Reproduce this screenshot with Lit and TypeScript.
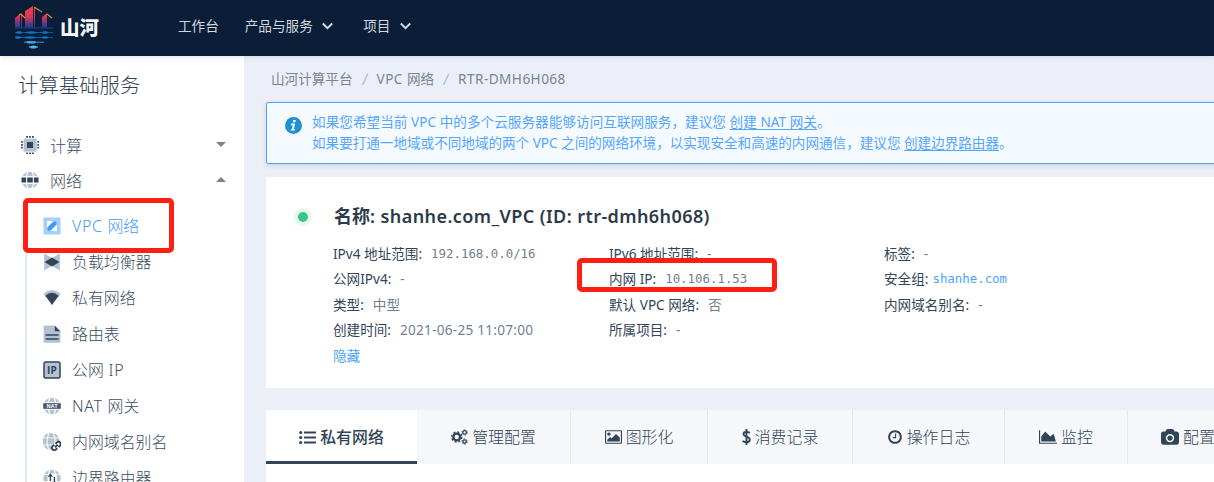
import { LitElement, html, svg, css } from "lit";
import { customElement } from "lit/decorators.js";

const globe = (color = "#b3c1d1") => svg`
  <circle cx="9" cy="9" r="8.6" fill="${color}"/>
  <ellipse cx="9" cy="9" rx="4" ry="9.2" fill="none" stroke="#fff" stroke-width="1.1"/>
  <path d="M0 5.400h18M0 12.600h18" stroke="#fff" stroke-width=".9"/>`;

const ICONS: Record<string, unknown> = {
  cpu: svg`<rect x="2.600" y="2.600" width="13" height="13" fill="#b3c1d1"/><rect x="6" y="6" width="6" height="6" fill="#324558"/>
    <path d="M5.200 .8h8M5.200 17.400h8" stroke="#324558" stroke-width="1.700" stroke-dasharray="1.800 1.100"/>
    <path d="M.9 5v8M17.300 5v8" stroke="#324558" stroke-width="1.700" stroke-dasharray="1.800 1.100"/>`,
  net: svg`${globe()}<path d="M0 6h18v6H0z" fill="#fff"/><path d="M.5 6.500h4.600v5H.5zM6.200 6.500h5.600v5H6.200zM12.900 6.500h4.600v5h-4.600z" fill="#324558"/>`,
  vpc: svg`<rect x=".5" y=".5" width="17" height="17" rx="1" fill="#a3cffd"/><rect x="4" y="4" width="10" height="10" fill="#fff"/>
    <path d="M4.300 13.700v-3.200l6.200-6.200h3.200v3.200l-6.200 6.200z" fill="#3f9bfa"/>`,
  lb: svg`<path d="M1.200 .5L9 5l7.800-4.500v17L9 13l-7.800 4.500z" fill="#b3c1d1"/><path d="M1.500 9L9 4.600 16.500 9 9 13.400z" fill="#324558"/>`,
  wifi: svg`<path d="M.4 4.800Q9-2.600 17.600 4.800L15.600 8Q9 2 2.400 8z" fill="#b3c1d1"/><path d="M2.300 6.700Q9 .8 15.700 6.700L9 16z" fill="#324558"/>`,
  doc: svg`<path d="M.6 .6h11.200l5.600 5.600v11.600H.6z" fill="#b3c1d1"/><path d="M11.800 .8v5.500h5.500z" fill="#324558"/>
    <path d="M2.600 10h13M2.600 14h13" stroke="#324558" stroke-width="1.500"/>`,
  ip: svg`<rect x="1" y="1" width="16" height="16" rx="1.500" fill="#b3c1d1" stroke="#324558" stroke-width="1.500"/>
    <text x="8.900" y="12.600" text-anchor="middle" font-family="Open Sans" font-weight="700" font-size="10" fill="#324558">IP</text>`,
  nat: svg`${globe()}<rect x=".2" y="6.200" width="17.600" height="5.600" fill="#4a5c70"/>
    <text x="9" y="10.900" text-anchor="middle" font-family="Open Sans" font-weight="700" font-size="5.200" fill="#fff">NAT</text>`,
  link: svg`<g transform="translate(-.9 -.6)">${globe()}</g><path d="M8.500 13l5-5.500H19V19H8.500z" fill="#fff"/>
    <g transform="rotate(-42 13.300 13)" fill="none" stroke="#324558" stroke-width="1.900"><path d="M12.600 10.700H10.500a2.300 2.300 0 0 0 0 4.600h2.100M14.200 10.700h2a2.300 2.300 0 0 1 0 4.600h-2M11.500 13h3.700"/></g>`,
  edge: svg`${globe()}<rect x="5" y="4.500" width="8.600" height="12" fill="#fff"/>
    <path d="M7.400 12V5.500M5.500 7.600l1.900-2.200 1.900 2.200M11.400 8v7M9.500 13l1.900 2.200 1.900-2.200" fill="none" stroke="#324558" stroke-width="1.400"/>`,
};

const FA: Record<string, unknown> = {
  list: svg`<svg width="17" height="15" viewBox="0 0 17 15"><path d="M5 2.500h12M5 7.500h12M5 12.500h12" stroke="currentColor" stroke-width="2"/><g fill="currentColor"><circle cx="1.700" cy="2.500" r="1.600"/><circle cx="1.700" cy="7.500" r="1.600"/><circle cx="1.700" cy="12.500" r="1.600"/></g></svg>`,
  cogs: svg`<svg width="17" height="16" viewBox="0 0 17.500 16" fill="none" stroke="currentColor"><circle cx="5.900" cy="8" r="3.500" stroke-width="2.500"/><circle cx="5.900" cy="8" r="5.200" stroke-width="1.400" stroke-dasharray="2.040 2.040"/>
    <circle cx="14" cy="3.300" r="1.800" stroke-width="1.400"/><circle cx="14" cy="3.300" r="2.800" stroke-width=".9" stroke-dasharray="1.470 1.470"/>
    <circle cx="14" cy="12.700" r="1.800" stroke-width="1.400"/><circle cx="14" cy="12.700" r="2.800" stroke-width=".9" stroke-dasharray="1.470 1.470"/></svg>`,
  image: svg`<svg width="17" height="16" viewBox="0 0 1920 1792" fill="currentColor"><path d="M640 576q0 80-56 136t-136 56-136-56-56-136 56-136 136-56 136 56 56 136zm1024 384v448h-1408v-192l320-320 160 160 512-512zm96-704h-1600q-13 0-22.500 9.500t-9.500 22.500v1216q0 13 9.500 22.500t22.500 9.500h1600q13 0 22.500-9.500t9.500-22.500v-1216q0-13-9.500-22.500t-22.500-9.500zm160 32v1216q0 66-47 113t-113 47h-1600q-66 0-113-47t-47-113v-1216q0-66 47-113t113-47h1600q66 0 113 47t47 113z"/></svg>`,
  dollar: svg`<svg width="9" height="16" viewBox="0 0 9 16" fill="none" stroke="currentColor" stroke-width="1.900"><path d="M4.500 0v16M7.800 3.900C5.500 2.500 1.500 2.400 1.500 5c0 3.200 6.300 2.200 6.300 5.600 0 3.200-4.600 3.300-7.200 1.400"/></svg>`,
  clock: svg`<svg width="16" height="16" viewBox="64 0 1664 1792" fill="currentColor"><path d="M1024 544v448q0 14-9 23t-23 9h-320q-14 0-23-9t-9-23v-64q0-14 9-23t23-9h224v-352q0-14 9-23t23-9h64q14 0 23 9t9 23zm416 352q0-148-73-273t-198-198-273-73-273 73-198 198-73 273 73 273 198 198 273 73 273-73 198-198 73-273zm224 0q0 209-103 385.500t-279.500 279.500-385.500 103-385.500-103-279.500-279.500-103-385.500 103-385.500 279.500-279.500 385.500-103 385.500 103 279.500 279.500 103 385.500z"/></svg>`,
  area: svg`<svg width="18" height="16" viewBox="0 0 2048 1792" fill="currentColor"><path d="M2048 1536v128h-2048v-1536h128v1408h1920zm-384-1024l256 896h-1664v-576l448-576 576 576z"/></svg>`,
  camera: svg`<svg width="18" height="17" viewBox="0 0 1920 1792" fill="currentColor"><path d="M960 672q119 0 203.500 84.500t84.500 203.500-84.500 203.500-203.500 84.500-203.500-84.500-84.500-203.500 84.500-203.500 203.500-84.500zm704-416q106 0 181 75t75 181v896q0 106-75 181t-181 75h-1408q-106 0-181-75t-75-181v-896q0-106 75-181t181-75h224l51-136q19-49 69.500-84.500t103.500-35.500h512q53 0 103.500 35.500t69.500 84.500l51 136h224zm-704 1152q185 0 316.500-131.500t131.500-316.500-131.500-316.500-316.500-131.500-316.500 131.500-131.500 316.500 131.500 316.500 316.500 131.500z"/></svg>`,
};

const MENU = [
  ["vpc", "VPC 网络"], ["lb", "负载均衡器"], ["wifi", "私有网络"], ["doc", "路由表"],
  ["ip", "公网 IP"], ["nat", "NAT 网关"], ["link", "内网域名别名"], ["edge", "边界路由器"],
];
const TABS = [
  ["list", "私有网络", 151], ["cogs", "管理配置", 154], ["image", "图形化", 137], ["dollar", "消费记录", 145],
  ["clock", "操作日志", 152], ["area", "监控", 123], ["camera", "配置", 120],
] as const;
const INFO: string[][][] = [
  [["IPv4 地址范围:", "192.168.0.0/16", "mono"], ["公网IPv4:", "-"], ["类型:", "中型"], ["创建时间:", "2021-06-25 11:07:00", "date"]],
  [["IPv6 地址范围:", "-"], ["内网 IP:", "10.106.1.53", "mono"], ["默认 VPC 网络:", "否"], ["所属项目:", "-"]],
  [["标签:", "-"], ["安全组:", "shanhe.com", "mono link"], ["内网域名别名:", "-"]],
];

/* Latin runs get slightly wider tracking than the Chinese text around them. */
const mixed = (text: string) =>
  text.split(/([\x20-\x7e]+)/).filter(Boolean).map((s) => (/^[\x20-\x7e]/.test(s) ? html`<span class="lat">${s}</span>` : s));

@customElement("app-root")
export class AppRoot extends LitElement {
  static styles = css`
    :host { display: block; position: relative; width: 1214px; height: 482px; overflow: hidden; background: #eceff8;
      font-family: "Noto Sans", "Noto Sans CJK SC", sans-serif; font-size: 13.600px; color: #324558; white-space: nowrap; }
    * { box-sizing: border-box; }
    svg { display: block; flex: none; }
    .lat { white-space: pre; }
    header { height: 56px; background: #0a1e38; display: flex; align-items: center; color: #d3d8df; padding-left: 15px; position: relative; box-shadow: 0 1px 5px rgba(20,40,70,.13); }
    .brand { font: 900 19.500px/24px "Noto Sans CJK SC", sans-serif; color: #f2f4f7; margin: -3px 0 0 7px; width: 118px; }
    .nav { display: flex; align-items: center; line-height: 20px; margin-top: -4px; }
    .nav svg { margin-left: 9.500px; }
    .n2 { margin-left: 26px; } .n3 { margin-left: 30px; }
    .body { display: flex; height: 426px; }
    aside { width: 244px; background: #fff; flex: none; overflow: hidden; }
    h1 { font-size: 20.400px; font-weight: 300; line-height: 30px; margin: 14px 0 0 18px; }
    .group { display: flex; align-items: center; height: 35px; padding: 0 18px 0 21px; font-size: 16px; font-weight: 300; color: #3c4f63; }
    .group.first { margin-top: 27px; }
    .group span { flex: 1; margin: 1px 0 0 11px; }
    .sub { margin: 11px 0 0 25px; border-left: 2px solid #e2e8f1; }
    .item { height: 36px; display: flex; align-items: center; gap: 11px; padding-left: 16px; font-size: 15.900px; font-weight: 300; color: #3c4f63; }
    .item span { margin-top: -1px; }
    .item .lat { letter-spacing: .7px; }
    .item.on { color: #3f9bfa; }
    main { flex: 1; min-width: 0; padding-left: 22px; overflow: hidden; }
    .crumb { display: flex; margin: 13px 0 0 5px; line-height: 20px; color: #788592; }
    .crumb i { font-style: normal; margin: 0 9px; color: #a3b9cf; width: 6px; text-align: center; transform: skewX(-8deg) scaleY(1.15); }
    .crumb .lat { letter-spacing: .45px; }
    .alert { margin-top: 13px; height: 62px; width: 960px; border: 1px solid #4ba3fa; border-radius: 2px; background: #f5faff; color: #55a6fa; display: flex; padding: 8px 0 0 18px; line-height: 21px; box-shadow: 0 2px 5px rgba(30,60,110,.15); }
    .alert svg { margin: 6px 10px 0 0; }
    .alert .l1 { letter-spacing: .04px; }
    .alert .l2 { letter-spacing: -.02px; }
    .alert u { text-underline-offset: 2px; }
    .card { margin-top: 13px; height: 211px; background: #fff; padding: 25px 0 0 67px; }
    .title { display: flex; align-items: center; font-size: 18px; font-weight: 600; line-height: 28px; color: #2c3a49; margin-left: -39px; }
    .title .lat { letter-spacing: .42px; }
    .title i { width: 18px; height: 18px; border: 4px solid #e8f8f0; border-radius: 50%; background: #36c882; margin: 1px 22px 0 0; }
    .cols { display: grid; grid-template-columns: 276px 275px 300px; margin: 10.500px 0 0; }
    .row { height: 25.500px; line-height: 25.500px; display: flex; gap: 9px; }
    .val { color: #717f8f; }
    .date { letter-spacing: .25px; }
    .mono { font-family: "DejaVu Sans Mono", monospace; font-size: 12.400px; }
    .link { color: #4ba3fa; margin-left: -5px; }
    .hide { color: #4ba3fa; line-height: 25px; margin-top: .5px; }
    .tabs { margin-top: 22px; height: 54px; display: flex; width: 1014px; background: #f5f7fa; font-size: 15.900px; font-weight: 300; }
    .tab { display: flex; align-items: center; justify-content: center; gap: 4px; border-right: 1px solid #e2ebee; flex: none; }
    .tab span { margin-top: -1px; }
    .tab.on { background: #fff; border-right: 0; border-bottom: 3px solid #324558; font-weight: 500; padding-top: 3px; }
    .tab:last-child { justify-content: flex-start; padding-left: 33px; border: 0; }
    .panel { height: 30px; background: #fff; width: 970px; }
    .mark { position: absolute; border: 5px solid #ff1e12; border-radius: 5px; }
    .m1 { left: 23px; top: 198px; width: 151px; height: 55px; }
    .m2 { left: 577px; top: 258px; width: 200px; height: 34px; }
  `;

  render() {
    const chev = html`<svg width="11" height="8" viewBox="0 0 11 8"><path d="M.8 1.500l4.700 4.700 4.700-4.700" fill="none" stroke="#d3d8df" stroke-width="2"/></svg>`;
    return html`
      <header>
        <svg width="38" height="44" viewBox="0 0 38 44">
          <defs><linearGradient id="g" x1="0" y1="0" x2="0" y2="1"><stop offset="0" stop-color="#fa3f4e"/><stop offset=".5" stop-color="#d63559"/><stop offset="1" stop-color="#163a9c"/></linearGradient></defs>
          <path fill="url(#g)" d="M0 12l5-4v14H0zM6 10l1-1v13H6zM10 5l8-5v22H10zM19 2l1 1v19h-1zM27 11l5-4v15h-5z"/>
          <path d="M4 9l2-1 4 4M19 1l8 5M32 8l5 4" fill="none" stroke="#d98c2b" stroke-width="1.200"/>
          <path d="M0 21.800h38" stroke="#123c91" stroke-width="1.200"/>
          <path d="M0 26.500h38M0 31.500h38" stroke="#0c5b9e" stroke-width="1"/>
          <g fill="#1278be"><ellipse cx="4" cy="26.500" rx="3" ry="1.200"/><ellipse cx="16" cy="26.500" rx="6" ry="1.200"/><ellipse cx="30" cy="26.500" rx="3" ry="1.200"/><ellipse cx="3" cy="31.500" rx="3" ry="1.200"/><ellipse cx="15" cy="31.500" rx="6" ry="1.200"/><ellipse cx="30" cy="31.500" rx="3" ry="1.200"/></g>
          <path d="M9 36.200h20" stroke="#2b83be" stroke-width="1.200"/><ellipse cx="16" cy="36.200" rx="5" ry="1.300" fill="#45a8de"/>
          <path d="M14 41h9" stroke="#3da0d4" stroke-width="1.500"/><ellipse cx="18.500" cy="41" rx="3" ry="1.500" fill="#4cb9ec"/>
        </svg>
        <div class="brand">山河</div>
        <div class="nav"><span>工作台</span><span class="n2">产品与服务</span>${chev}<span class="n3">项目</span>${chev}</div>
      </header>
      <div class="body">
        <aside>
          <h1>计算基础服务</h1>
          <div class="group first"><svg width="18" height="18" viewBox="0 0 18 18">${ICONS.cpu}</svg><span>计算</span>
            <svg width="10" height="5" viewBox="0 0 10 5"><path d="M0 0h10L5 5z" fill="#7b838c"/></svg></div>
          <div class="group"><svg width="18" height="18" viewBox="0 0 18 18">${ICONS.net}</svg><span>网络</span>
            <svg width="10" height="5" viewBox="0 0 10 5"><path d="M0 5h10L5 0z" fill="#7b838c"/></svg></div>
          <div class="sub">${MENU.map(([k, t], n) => html`<div class="item ${n ? "" : "on"}"><svg width="18" height="18" viewBox="0 0 18 18">${ICONS[k]}</svg><span>${mixed(t)}</span></div>`)}</div>
        </aside>
        <main>
          <div class="crumb"><span>山河计算平台</span><i>/</i><span>${mixed("VPC 网络")}</span><i>/</i><span>${mixed("RTR-DMH6H068")}</span></div>
          <div class="alert">
            <svg width="17" height="17" viewBox="0 0 17 17"><circle cx="8.500" cy="8.500" r="8.500" fill="#2090d4"/><path d="M8.300 2.900h2.500l-.5 2.300H7.800zM6.300 6.600h3.800l-1.200 5.300h1.300l-.4 1.700H5.700l.4-1.700h.8l.8-3.600H5.900z" fill="#fff"/></svg>
            <div><div class="l1">如果您希望当前 VPC 中的多个云服务器能够访问互联网服务，建议您 <u>创建 NAT 网关</u>。</div>
            <div class="l2">如果要打通一地域或不同地域的两个 VPC 之间的网络环境，以实现安全和高速的内网通信，建议您 <u>创建边界路由器</u>。</div></div>
          </div>
          <div class="card">
            <div class="title"><i></i><span>名称${mixed(": shanhe.com_VPC (ID: rtr-dmh6h068)")}</span></div>
            <div class="cols">${INFO.map((c) => html`<div>${c.map(([k, v, x]) => html`<div class="row"><span>${k}</span><span class="val ${x ?? ""}">${v}</span></div>`)}</div>`)}</div>
            <div class="hide">隐藏</div>
          </div>
          <div class="tabs">${TABS.map(([k, t, w], n) => html`<div class="tab ${n ? "" : "on"}" style="width:${w}px">${FA[k]}<span>${t}</span></div>`)}</div>
          <div class="panel"></div>
        </main>
      </div>
      <div class="mark m1"></div><div class="mark m2"></div>
    `;
  }
}
